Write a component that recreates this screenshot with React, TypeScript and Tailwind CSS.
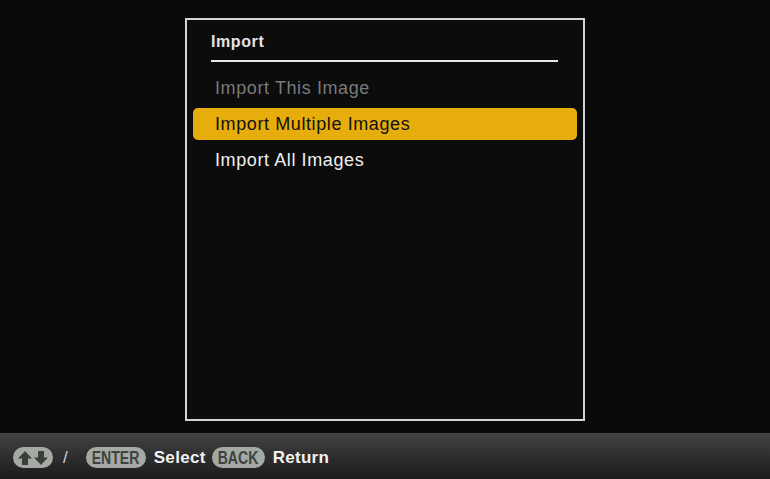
import React from "react"

const items = [
  { label: "Import This Image", state: "disabled" },
  { label: "Import Multiple Images", state: "active" },
  { label: "Import All Images", state: "normal" },
]

function Key({ children, className }: { children: React.ReactNode; className: string }) {
  return (
    <span
      className={`flex h-[21px] items-center justify-center rounded-full bg-[#a4aaa3] text-[18px] font-bold leading-none text-[#404240] ${className}`}
    >
      {children}
    </span>
  )
}

export default function App() {
  return (
    <div
      className="flex h-[479px] w-[770px] flex-col overflow-hidden bg-[#0a0a0a]"
      style={{ fontFamily: '"Liberation Sans", Arial, sans-serif' }}
    >
      {/* Main */}
      <main className="flex flex-1 justify-center pt-[18px]">
        <div className="flex h-[403px] w-[400px] flex-col border-2 border-[#d4d4d4] bg-[#0c0c0c]">
          <div className="px-[24px] pt-[12px]">
            <div className="text-[16px] font-bold leading-[20px] tracking-[0.6px] text-[#e4e4e4]">Import</div>
            <div className="mt-[8px] h-[2px] w-[347px] bg-[#e6e6e6]" />
          </div>
          <ul className="mt-[10px] flex flex-col gap-[4px] px-[6px]">
            {items.map((item) => (
              <li
                key={item.label}
                className={`flex h-[32px] items-center rounded-[5px] px-[22px] text-[18px] tracking-[0.6px] ${
                  item.state === "active"
                    ? "bg-[#e6ad0c] text-[#111111]"
                    : item.state === "disabled"
                      ? "text-[#7a7a7a]"
                      : "text-[#f0f0f0]"
                }`}
              >
                {item.label}
              </li>
            ))}
          </ul>
        </div>
      </main>

      {/* Footer */}
      <footer className="mt-[12px] flex h-[46px] items-center bg-gradient-to-b from-[#434343] to-[#1c1c1c] pl-[13px] pt-[3px]">
        <Key className="w-[40px]">
          <svg width="32" height="16" viewBox="0 0 32 16" fill="#3c3e3c">
            <path d="M8 1 L15 8.5 H11 V15 H5 V8.5 H1 Z" />
            <path d="M24 15 L31 7.5 H27 V1 H21 V7.5 H17 Z" />
          </svg>
        </Key>
        <span className="ml-[10px] text-[17px] text-[#cfcfcf]">/</span>
        <Key className="ml-[18px] w-[60px]">
          <span className="inline-block scale-x-[0.78]">ENTER</span>
        </Key>
        <span className="ml-[8px] text-[17px] font-bold tracking-[0.3px] text-[#f2f2f2]">Select</span>
        <Key className="ml-[6px] w-[53px]">
          <span className="inline-block scale-x-[0.78]">BACK</span>
        </Key>
        <span className="ml-[8px] text-[17px] font-bold tracking-[0.3px] text-[#f2f2f2]">Return</span>
      </footer>
    </div>
  )
}
